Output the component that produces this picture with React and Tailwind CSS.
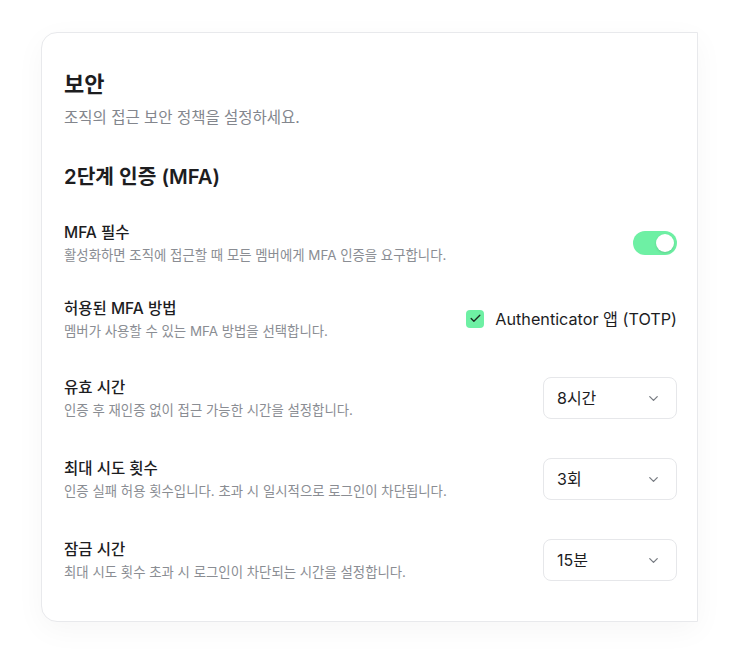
import React, { useState } from "react";
import { ChevronDown, Check } from "lucide-react";

const font = { fontFamily: 'Inter, "Noto Sans CJK KR", sans-serif' };

function Toggle({ on, setOn }) {
    return (
        <button
            onClick={() => setOn(!on)}
            className={"flex h-[24px] w-[44px] items-center rounded-full p-[3px] " + (on ? "bg-[#6ef0a4]" : "bg-gray-200")}
        >
            <span className={"h-[18px] w-[18px] rounded-full bg-white shadow-sm " + (on ? "ml-auto" : "")} />
        </button>
    );
}

function Select({ value }) {
    return (
        <div className="flex h-[42px] w-[134px] items-center justify-between rounded-lg border border-[#e6e7ea] bg-white pl-[13px] pr-[15px] text-[16px] text-[#1d1d1f]">
            <span>{value}</span>
            <ChevronDown size={15} strokeWidth={2} className="text-[#777b82]" />
        </div>
    );
}

function Row({ title, desc, children, className }) {
    return (
        <div className={"flex items-center justify-between " + className}>
            <div>
                <p className="text-[15.5px] font-medium leading-[22px] text-[#1d1d1f]">{title}</p>
                <p className="mt-[2px] text-[13.4px] leading-[18px] text-[#8a8d93]">{desc}</p>
            </div>
            {children}
        </div>
    );
}

export default function App() {
    const [mfa, setMfa] = useState(true);
    const [totp, setTotp] = useState(true);

    return (
        <div className="min-h-screen bg-white pt-[32px] pl-[41px]" style={font}>
            <div className="w-[657px] rounded-l-2xl border border-[#e8e9ec] bg-white pt-[37px] pb-[40px] pl-[22px] pr-[20px] shadow-[0_8px_30px_rgba(0,0,0,0.04)]">
                <h1 className="text-[22px] font-semibold leading-[28px] text-[#1d1d1f]">보안</h1>
                <p className="mt-[10px] text-[15.5px] leading-[20px] text-[#83868d]">조직의 접근 보안 정책을 설정하세요.</p>

                <h2 className="mt-[35px] text-[20.3px] font-semibold leading-[28px] text-[#1d1d1f]">2단계 인증 (MFA)</h2>

                <Row className="mt-[31px]" title="MFA 필수" desc="활성화하면 조직에 접근할 때 모든 멤버에게 MFA 인증을 요구합니다.">
                    <Toggle on={mfa} setOn={setMfa} />
                </Row>

                <Row className="mt-[34px]" title="허용된 MFA 방법" desc="멤버가 사용할 수 있는 MFA 방법을 선택합니다.">
                    <label className="flex items-center gap-[11px] text-[16.2px] text-[#1d1d1f]">
                        <button
                            onClick={() => setTotp(!totp)}
                            className={"flex h-[18px] w-[18px] items-center justify-center rounded-[4px] " + (totp ? "bg-[#6ef0a4]" : "border border-gray-300")}
                        >
                            {totp && <Check size={13} strokeWidth={2.5} className="text-[#1d2a22]" />}
                        </button>
                        Authenticator 앱 (TOTP)
                    </label>
                </Row>

                <Row className="mt-[37px]" title="유효 시간" desc="인증 후 재인증 없이 접근 가능한 시간을 설정합니다.">
                    <Select value="8시간" />
                </Row>

                <Row className="mt-[39px]" title="최대 시도 횟수" desc="인증 실패 허용 횟수입니다. 초과 시 일시적으로 로그인이 차단됩니다.">
                    <Select value="3회" />
                </Row>

                <Row className="mt-[39px]" title="잠금 시간" desc="최대 시도 횟수 초과 시 로그인이 차단되는 시간을 설정합니다.">
                    <Select value="15분" />
                </Row>
            </div>
        </div>
    );
}
